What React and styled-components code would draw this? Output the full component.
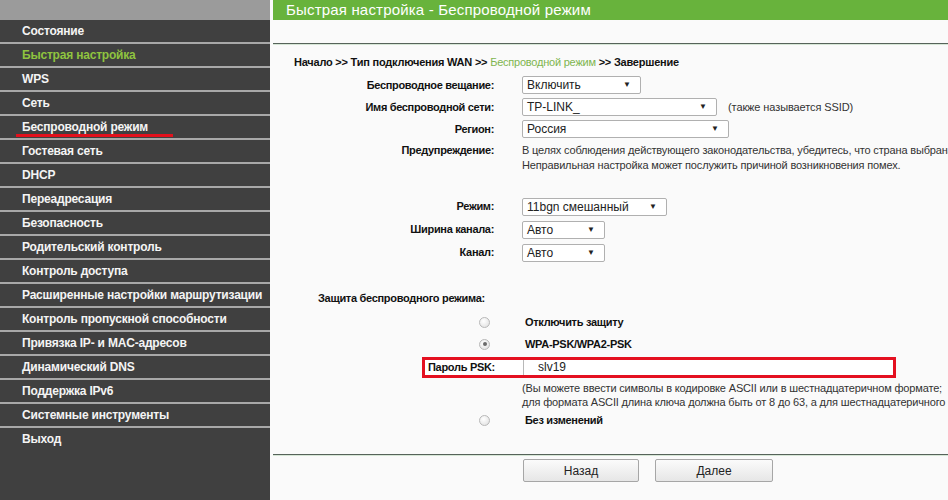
import React from 'react';
import styled, { createGlobalStyle } from 'styled-components';

const GlobalStyle = createGlobalStyle`
  html, body {
    margin: 0;
    padding: 0;
    background: #fafafa;
  }
  body {
    font-family: 'Liberation Sans', Arial, sans-serif;
  }
`;

const Page = styled.div`
  display: flex;
  width: 948px;
  height: 500px;
  overflow: hidden;
  background: #fafafa;
`;

/* ---------- sidebar ---------- */

const Sidebar = styled.nav`
  width: 270px;
  flex-shrink: 0;
  background: #404040;
  display: flex;
  flex-direction: column;
`;

const SideHead = styled.div`
  height: 20px;
  background: #9b9b9b;
`;

const SideItem = styled.div`
  position: relative;
  height: 22px;
  line-height: 23px;
  padding-left: 22px;
  font-size: 12px;
  font-weight: bold;
  letter-spacing: -0.2px;
  color: ${(p) => (p.$active ? '#8fc43f' : '#f4f4f4')};
  border-bottom: ${(p) => (p.$last ? 'none' : '2px solid #a8a8a8')};
  white-space: nowrap;

  ${(p) =>
    p.$marked &&
    `
    &::after {
      content: '';
      position: absolute;
      left: 16px;
      bottom: 1px;
      width: 157px;
      height: 3px;
      background: #e3101c;
    }
  `}
`;

/* ---------- main ---------- */

const Main = styled.main`
  flex: 1;
  min-width: 0;
  margin-left: 3px;
  display: flex;
  flex-direction: column;
  overflow: hidden;
`;

const TitleBar = styled.div`
  height: 20px;
  line-height: 20px;
  background: #68b33c;
  color: #fff;
  font-size: 15px;
  letter-spacing: 0.18px;
  padding-left: 13px;
  white-space: nowrap;
`;

const Rule = styled.div`
  height: 1px;
  background: #56635a;
  border-bottom: 1px solid #d6e6d6;
  margin-top: ${(p) => p.$top || 0}px;
`;

const Content = styled.div`
  padding-left: 21px;
  color: #222;
  white-space: nowrap;
`;

const Crumbs = styled.div`
  margin-top: 10px;
  height: 14px;
  line-height: 14px;
  font-size: 11px;
  font-weight: bold;
  letter-spacing: -0.22px;
  color: #111;
`;

const CrumbActive = styled.span`
  font-weight: normal;
  color: #7eb54f;
`;

const Row = styled.div`
  display: grid;
  grid-template-columns: 200px 1fr;
  column-gap: 28px;
  align-items: ${(p) => (p.$top ? 'start' : 'center')};
  height: ${(p) => (p.$h ? `${p.$h}px` : 'auto')};
  margin-top: ${(p) => p.$mt || 0}px;
`;

const Label = styled.div`
  text-align: right;
  font-size: 11px;
  font-weight: bold;
  letter-spacing: -0.33px;
  color: #111;
  line-height: 15px;
`;

const Value = styled.div`
  display: flex;
  align-items: center;
  gap: 11px;
  font-size: 11px;
  letter-spacing: -0.1px;
  color: #333;
`;

const Select = styled.div`
  position: relative;
  box-sizing: border-box;
  width: ${(p) => p.$w}px;
  height: 18px;
  line-height: 16px;
  padding-left: 4px;
  border: 1px solid #b0b0b0;
  border-radius: 2px;
  background: #fff;
  font-size: 12px;
  letter-spacing: 0;
  color: #222;

  &::after {
    content: '▼';
    position: absolute;
    right: 9px;
    top: 0;
    font-size: 8px;
    color: #222;
  }
`;

const Note = styled.div`
  font-size: 11px;
  letter-spacing: -0.16px;
  color: #333;
  line-height: ${(p) => p.$lh || 15}px;
`;

const Section = styled.div`
  margin-top: ${(p) => p.$mt || 0}px;
  padding-left: 24px;
  height: 16px;
  line-height: 16px;
  font-size: 11px;
  font-weight: bold;
  letter-spacing: -0.3px;
  color: #111;
`;

const RadioCell = styled.div`
  display: flex;
  justify-content: flex-end;
  padding-right: 4px;
`;

const Radio = styled.span`
  box-sizing: border-box;
  width: 11px;
  height: 11px;
  border-radius: 50%;
  border: 1px solid #b8b8b8;
  background: radial-gradient(circle at 40% 35%, #ffffff 0%, #e4e4e4 80%);
  display: flex;
  align-items: center;
  justify-content: center;

  &::after {
    content: '';
    width: 4px;
    height: 4px;
    border-radius: 50%;
    background: ${(p) => (p.$checked ? '#6a6a6a' : 'transparent')};
  }
`;

const RadioText = styled.div`
  padding-left: 3px;
  font-size: 11px;
  font-weight: bold;
  letter-spacing: -0.3px;
  color: #111;
`;

const PskBox = styled.div`
  box-sizing: border-box;
  display: flex;
  margin: 2px 0 0 128px;
  width: 474px;
  height: 21px;
  border: 3px solid #e41020;
  background: #fff;
`;

const PskLabel = styled.div`
  width: 95px;
  padding-left: 3px;
  line-height: 15px;
  font-size: 11px;
  font-weight: bold;
  letter-spacing: -0.3px;
  color: #111;
`;

const PskInput = styled.div`
  flex: 1;
  border-left: 1px solid #b8b8b8;
  padding-left: 14px;
  line-height: 15px;
  font-size: 12px;
  color: #222;
`;

const Help = styled.div`
  margin: 3px 0 0 228px;
`;

const Buttons = styled.div`
  display: flex;
  gap: 16px;
  padding-left: 250px;
  margin-top: 3px;
`;

const Button = styled.button`
  box-sizing: border-box;
  width: ${(p) => p.$w}px;
  height: 23px;
  border: 1px solid #a6a6a6;
  border-radius: 2px;
  background: linear-gradient(#fbfbfb, #e6e6e6);
  font-family: 'Liberation Sans', Arial, sans-serif;
  font-size: 12px;
  color: #222;
  padding: 0;
`;

const menu = [
  'Состояние',
  'Быстрая настройка',
  'WPS',
  'Сеть',
  'Беспроводной режим',
  'Гостевая сеть',
  'DHCP',
  'Переадресация',
  'Безопасность',
  'Родительский контроль',
  'Контроль доступа',
  'Расширенные настройки маршрутизации',
  'Контроль пропускной способности',
  'Привязка IP- и MAC-адресов',
  'Динамический DNS',
  'Поддержка IPv6',
  'Системные инструменты',
  'Выход',
];

export default function App() {
  return (
    <>
      <GlobalStyle />
      <Page>
        <Sidebar>
          <SideHead />
          {menu.map((item, i) => (
            <SideItem
              key={item}
              $active={item === 'Быстрая настройка'}
              $marked={item === 'Беспроводной режим'}
              $last={i === menu.length - 1}
            >
              {item}
            </SideItem>
          ))}
        </Sidebar>

        <Main>
          <TitleBar>Быстрая настройка - Беспроводной режим</TitleBar>
          <Rule $top={23} />
          <Content>
            <Crumbs>
              Начало &gt;&gt; Тип подключения WAN &gt;&gt; <CrumbActive>Беспроводной режим</CrumbActive> &gt;&gt;
              Завершение
            </Crumbs>

            <Row $h={22} $mt={5}>
              <Label>Беспроводное вещание:</Label>
              <Value>
                <Select $w={119}>Включить</Select>
              </Value>
            </Row>
            <Row $h={22}>
              <Label>Имя беспроводной сети:</Label>
              <Value>
                <Select $w={195}>TP-LINK_</Select>
                <span>(также называется SSID)</span>
              </Value>
            </Row>
            <Row $h={22}>
              <Label>Регион:</Label>
              <Value>
                <Select $w={207}>Россия</Select>
              </Value>
            </Row>
            <Row $top $mt={3}>
              <Label>Предупреждение:</Label>
              <Note>
                В целях соблюдения действующего законодательства, убедитесь, что страна выбрана правильно.
                <br />
                Неправильная настройка может послужить причиной возникновения помех.
              </Note>
            </Row>

            <Row $h={23} $mt={22}>
              <Label>Режим:</Label>
              <Value>
                <Select $w={145}>11bgn смешанный</Select>
              </Value>
            </Row>
            <Row $h={23}>
              <Label>Ширина канала:</Label>
              <Value>
                <Select $w={83}>Авто</Select>
              </Value>
            </Row>
            <Row $h={23}>
              <Label>Канал:</Label>
              <Value>
                <Select $w={83}>Авто</Select>
              </Value>
            </Row>

            <Section $mt={26}>Защита беспроводного режима:</Section>

            <Row $h={22} $mt={5}>
              <RadioCell>
                <Radio />
              </RadioCell>
              <RadioText>Отключить защиту</RadioText>
            </Row>
            <Row $h={22}>
              <RadioCell>
                <Radio $checked />
              </RadioCell>
              <RadioText>WPA-PSK/WPA2-PSK</RadioText>
            </Row>

            <PskBox>
              <PskLabel>Пароль PSK:</PskLabel>
              <PskInput>slv19</PskInput>
            </PskBox>

            <Help>
              <Note $lh={14}>
                (Вы можете ввести символы в кодировке ASCII или в шестнадцатеричном формате;
                <br />
                для формата ASCII длина ключа должна быть от 8 до 63, а для шестнадцатеричного - 64.)
              </Note>
            </Help>

            <Row $h={22}>
              <RadioCell>
                <Radio />
              </RadioCell>
              <RadioText>Без изменений</RadioText>
            </Row>
          </Content>

          <Rule $top={23} />

          <Buttons>
            <Button $w={116}>Назад</Button>
            <Button $w={118}>Далее</Button>
          </Buttons>
        </Main>
      </Page>
    </>
  );
}
